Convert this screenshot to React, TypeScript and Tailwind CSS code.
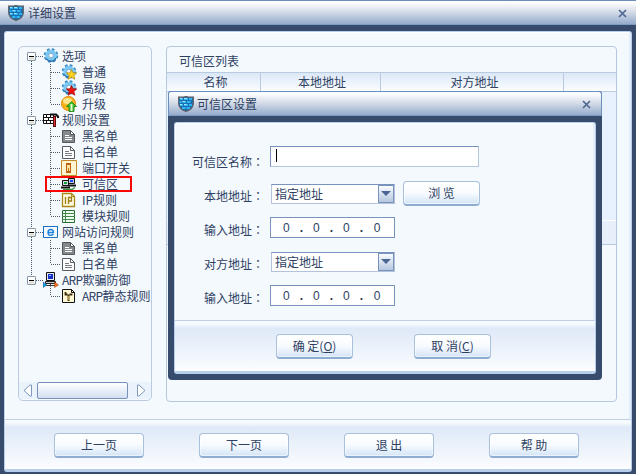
import React from "react";

type IconName =
  | "gear" | "gearGold" | "gearRed" | "upgrade" | "rules" | "docDark" | "docLight"
  | "port" | "zone" | "ip" | "module" | "web" | "arp" | "arpRule";

function Shield() {
  return (
    <svg width="16" height="16" viewBox="0 0 16 16" className="block shrink-0">
      <path d="M.7 1Q4 1.500 8 .6q4 .9 7.300.4V7.500C15.300 11.500 12 14 8 15.400 4 14 .7 11.500.7 7.500z" fill="#1c6fae" stroke="#5b5f66" strokeWidth="1.200" />
      <path d="M2 2h3v2H2zM6 2h4v2H6zM11 2h3v2h-3zM1.500 5h2v2h-2zM4.500 5H8v2H4.500zM9 5h3.500v2H9zM2 8h3v2H2zM6 8h4v2H6zM11 8h3v2h-3zM4 11h3.500v2H4zM8.500 11H12v2H8.500z" fill="#2cb4f6" />
      <path d="M2 2h2v1H2zM6 2h3v1H6zM4.500 5H7v1H4.500zM2 8h2v1H2zM6 8h2.500v1H6z" fill="#9be8ff" />
    </svg>
  );
}

function Gear() {
  return (
    <g>
      <circle cx="8" cy="7.500" r="5.900" fill="none" stroke="#3a8cc6" strokeWidth="2.800" strokeDasharray="2.600 2.030" />
      <circle cx="8" cy="7.500" r="4.200" fill="#f4faff" stroke="#7cc8f2" strokeWidth="3.200" />
      <path d="M3.200 10.500A5.500 5.500 0 0 0 13 10" fill="none" stroke="#2a6fae" strokeWidth="1.400" />
      <circle cx="8" cy="7.500" r="2.300" fill="#fff" stroke="#3f87bd" strokeWidth=".7" />
    </g>
  );
}

const STAR = "M10.500 5.500l1.500 3.200 3.700.2-2.800 2.500 1 3.900-3.400-2-3.400 2 1-3.900L5.300 8.900l3.700-.2z";

function Doc({ fill, line, edge }: { fill: string; line: string; edge: string }) {
  return (
    <g>
      <path d="M1.500 2.500h8l4 4v8h-12z" fill={fill} stroke={edge} />
      <path d="M9.500 2.500v4h4z" fill="#fff" stroke={edge} />
      <path d="M4 7.500h4M4 9.500h7M4 11.500h7" stroke={line} />
    </g>
  );
}

function Icon({ name }: { name: IconName }) {
  return (
    <svg width="16" height="16" viewBox="0 0 16 16" className="block shrink-0">
      {name === "gear" && <Gear />}
      {name === "gearGold" && (<><Gear /><path d={STAR} fill="#ffd21e" stroke="#a77a00" strokeWidth=".6" /></>)}
      {name === "gearRed" && (<><Gear /><path d={STAR} fill="#f01010" stroke="#8e0000" strokeWidth=".6" /></>)}
      {name === "upgrade" && (
        <>
          <circle cx="7.500" cy="7.500" r="7" fill="#ffb51c" stroke="#dc8608" />
          <ellipse cx="6.500" cy="5" rx="4.500" ry="3" fill="#ffe58c" />
          <path d="M10.500 5.500l5 5H13v5H8v-5H5.500z" fill="#3fbf2c" stroke="#1f8a1a" strokeWidth=".9" />
          <path d="M10.500 8v7" stroke="#e4fbd0" strokeWidth="2" />
        </>
      )}
      {name === "rules" && (
        <>
          <path d="M.5 2.500h10v9H.5z" fill="#fff" stroke="#111" />
          <path d="M0 5.500h11M0 8.500h11M3.500 3v2.500M7.500 3v2.500M5.500 6v2.500M3.500 9v2.500M7.500 9v2.500" stroke="#111" />
          <path d="M7 2.500h6l2 2v1.500" fill="none" stroke="#111" strokeWidth="2" />
          <path d="M11.500 4v11" stroke="#5b0d0d" strokeWidth="3" />
          <path d="M11.500 5v9" stroke="#e63030" />
        </>
      )}
      {name === "docDark" && <Doc fill="#85888d" line="#fff" edge="#54575c" />}
      {name === "docLight" && <Doc fill="#fff" line="#777c82" edge="#565b61" />}
      {name === "port" && (
        <>
          <path d="M.5.5h15v15H.5z" fill="#fff4d2" stroke="#c38a25" />
          <path d="M5 3h5v10H5z" fill="#b86212" />
          <path d="M6 5h3v6H6z" fill="#ffe2a0" />
          <path d="M7 8h1v3H7z" fill="#d07a1f" />
        </>
      )}
      {name === "zone" && (
        <>
          <path d="M7.500 2.500h6v5h-6z" fill="#c4cad2" stroke="#111" />
          <path d="M9 4h3v2H9z" fill="#1a46ff" />
          <path d="M7 9.500h8" stroke="#111" strokeWidth="2" />
          <path d="M1.500 4.500h6v5h-6z" fill="#d5d9de" stroke="#111" />
          <path d="M3 6h3v2H3z" fill="#12a53c" />
          <path d="M0 11.500h9" stroke="#111" strokeWidth="2" />
          <path d="M2 13.500h9l3-2" fill="none" stroke="#3a8f3a" strokeWidth="1.300" />
        </>
      )}
      {name === "ip" && (
        <>
          <path d="M1.500 1.500h9l3 3v10h-12z" fill="#fffbe2" stroke="#a98719" strokeWidth="1.300" />
          <path d="M10.500 1.500v3h3" fill="none" stroke="#a98719" />
          <path d="M4.500 5v7M7.500 12V5.500h3v3.500h-3" fill="none" stroke="#9a7c12" strokeWidth="1.300" />
        </>
      )}
      {name === "module" && (
        <>
          <path d="M1.500 2.500h12v12h-12z" fill="#eefaef" stroke="#2d6b35" />
          <path d="M1 5.500h13M1 8.500h13M1 11.500h13M4.500 3v11" stroke="#3f8a48" />
        </>
      )}
      {name === "web" && (
        <>
          <path d="M.5 2.500h14v11H.5z" fill="#f4faff" stroke="#1d6fc0" />
          <path d="M0 2.500h15" stroke="#1d6fc0" />
          <path d="M5 8.500h5.500c0-4-5.500-4-5.500 0s4 3.200 5.300 1.500" fill="none" stroke="#1d83dc" strokeWidth="1.400" />
        </>
      )}
      {name === "arp" && (
        <>
          <path d="M3.500.5h8v8h-8z" fill="#e7eaee" stroke="#111" />
          <path d="M5 2h5v5H5z" fill="#1430c8" />
          <path d="M6 3h2v1H6z" fill="#9ec4ff" />
          <path d="M2.500 9.500h10v2h-10z" fill="#c4c9ce" stroke="#222" />
          <path d="M7.500 11.500v3M3 13.500h9" stroke="#333" />
          <path d="M0 10l4 3-4 2.500z" fill="#1ba0e8" stroke="#12517c" strokeWidth=".5" />
          <path d="M11.500 10l4 3-4 2.500z" fill="#f4721c" stroke="#95380a" strokeWidth=".5" />
        </>
      )}
      {name === "arpRule" && (
        <>
          <path d="M1.500 1.500h9l3 3v10h-12z" fill="#fff8d2" stroke="#111" />
          <path d="M10.500 1.500v3h3" fill="none" stroke="#111" />
          <path d="M4.500 4v2.500h2M10.500 5.500v1h-2M7.500 6.500V13" fill="none" stroke="#3a2a08" strokeWidth="1.800" />
          <path d="M7.500 8v4" stroke="#e0b040" strokeWidth=".8" />
        </>
      )}
    </svg>
  );
}

type Row = { text: string; icon: IconName; child?: boolean; last?: boolean; noRoot?: boolean; marked?: boolean };

const ROWS: Row[] = [
  { text: "选项", icon: "gear" },
  { text: "普通", icon: "gearGold", child: true },
  { text: "高级", icon: "gearRed", child: true },
  { text: "升级", icon: "upgrade", child: true, last: true },
  { text: "规则设置", icon: "rules" },
  { text: "黑名单", icon: "docDark", child: true },
  { text: "白名单", icon: "docLight", child: true },
  { text: "端口开关", icon: "port", child: true },
  { text: "可信区", icon: "zone", child: true, marked: true },
  { text: "IP规则", icon: "ip", child: true },
  { text: "模块规则", icon: "module", child: true, last: true },
  { text: "网站访问规则", icon: "web" },
  { text: "黑名单", icon: "docDark", child: true },
  { text: "白名单", icon: "docLight", child: true, last: true },
  { text: "ARP欺骗防御", icon: "arp", noRoot: true },
  { text: "ARP静态规则", icon: "arpRule", child: true, last: true, noRoot: true },
];

function Guides({ row, index }: { row: Row; index: number }) {
  const dots = { stroke: "#4f5b6b", strokeDasharray: "1 1", fill: "none" };
  if (row.child) {
    return (
      <svg width="42" height="16" className="block shrink-0">
        {!row.noRoot && <path d="M12.500 0v16" {...dots} />}
        <path d={row.last ? "M31.500 0v8" : "M31.500 0v16"} {...dots} />
        <path d="M32 8.500h10" {...dots} />
      </svg>
    );
  }
  return (
    <svg width="24" height="16" className="block shrink-0">
      {index > 0 && <path d="M12.500 0v4" {...dots} />}
      {!row.noRoot && <path d="M12.500 13v3" {...dots} />}
      <path d="M17 8.500h7" {...dots} />
      <rect x="8.500" y="4.500" width="8" height="8" rx=".5" fill="#fff" stroke="#8795a8" />
      <path d="M10 10.500h5.500" stroke="#dcd9d0" strokeWidth="2" />
      <path d="M10 8.500h5" stroke="#000" />
    </svg>
  );
}

function TreeRow({ row, index }: { row: Row; index: number }) {
  return (
    <div className="relative flex h-4 items-center">
      <Guides row={row} index={index} />
      <Icon name={row.icon} />
      <span className={`whitespace-nowrap leading-4 ${row.child ? "ml-[5px]" : "ml-[3px]"}`}>
        {row.text.startsWith("ARP") ? (
          <><span className="tracking-[-0.7px]">ARP</span>{row.text.slice(3)}</>
        ) : row.text}
      </span>
      {row.marked && <span className="absolute left-[26px] top-0 h-4 w-[87px] border-2 border-[#f90606]" />}
    </div>
  );
}

function Button({ children, wide }: { children: React.ReactNode; wide?: boolean }) {
  return (
    <button
      className={`h-[25px] shrink-0 whitespace-pre rounded-[4px] border border-[#a9c0dc] border-b-2 border-b-[#8fadd1] bg-linear-to-b from-white via-[#f8fbff] to-[#d3e4f6] pb-px leading-5 shadow-[inset_0_0_0_1px_#ffffff80] ${wide ? "w-[90px]" : "w-[77px]"}`}
    >
      {children}
    </button>
  );
}

function TitleBar({ title, inner }: { title: string; inner?: boolean }) {
  return (
    <div
      className={`flex h-[25px] shrink-0 items-center border-t border-[#6a8fbd] bg-linear-to-b from-white from-5% via-[#dbe1eb] via-40% to-[#91a8ca] shadow-[inset_0_-1px_0_#7e9bc4] ${inner ? "rounded-t-[3px] border-x pl-[9px] pr-[10px]" : "pl-2 pr-[9px]"}`}
    >
      <Shield />
      <span className={`flex-1 ${inner ? "ml-[3px]" : "ml-[4px]"}`}>{title}</span>
      <svg width="9" height="9" viewBox="0 0 9 9" className="block">
        <path d="M1 1l7 7M8 1L1 8" stroke="#4f678f" strokeWidth="1.700" />
      </svg>
    </div>
  );
}

function Field({ label, children }: { label: string; children: React.ReactNode }) {
  return (
    <div className="flex h-[34px] items-start">
      <div className="flex w-[96px] shrink-0 justify-end whitespace-nowrap pr-[7px] pt-[4px] leading-4">
        {label}
        <span className="w-3 [font-family:'Noto_Sans_CJK_TC',sans-serif]">：</span>
      </div>
      {children}
    </div>
  );
}

function Select() {
  return (
    <div className="flex h-5 w-[124px] border border-[#b4c3d9] border-t-[#7893bc] bg-white">
      <span className="flex-1 pl-[3px] leading-[17px]">指定地址</span>
      <span className="flex h-[18px] w-[16px] items-center justify-center border border-[#7893bc] bg-linear-to-b from-[#fafcff] to-[#b6c7df]">
        <svg width="10" height="6" className="block"><path d="M0 0h10L5 5z" fill="#4b6594" /></svg>
      </span>
    </div>
  );
}

function IpBox() {
  return (
    <div className="flex h-[21px] w-[125px] items-center border border-[#7893bc] bg-white pl-[11px] font-['Liberation_Sans',sans-serif] text-[12px]">
      {[0, 1, 2, 3].map((i) => (
        <span key={i} className="flex w-[30px]">
          <span className="w-[10px] text-center">0</span>
          {i < 3 && <span className="w-[24px] text-center font-bold text-[#263247]">.</span>}
        </span>
      ))}
    </div>
  );
}

function Dialog() {
  return (
    <div className="absolute left-[168px] top-[91px] flex h-[289px] w-[434px] flex-col rounded-[4px] bg-[#374b6c]">
      <TitleBar title="可信区设置" inner />
      <div className="mx-[6px] mb-[6px] mt-[6px] flex min-h-0 flex-1 flex-col rounded-[3px] border border-b-[3px] border-[#b8cfec] bg-[#f4f9fe] shadow-[inset_1px_1px_0_#fff,inset_-2px_0_1px_#e3eefb]">
        <div className="flex h-[197px] shrink-0 flex-col pt-[23px]">
          <div className="flex h-[38px] items-start">
            <div className="flex w-[95px] shrink-0 justify-end whitespace-nowrap pr-[6px] pt-[8px] leading-4">
              可信区名称
              <span className="w-3 [font-family:'Noto_Sans_CJK_TC',sans-serif]">：</span>
            </div>
            <div className="h-[21px] w-[209px] border border-[#b4c6dc] border-t-[#7893bc] border-l-[#7893bc] bg-white pl-[5px] pt-[2px]">
              <div className="h-[13px] w-px bg-black" />
            </div>
          </div>
          <Field label="本地地址">
            <Select />
            <div className="-mt-[3px] ml-[8px]"><Button>浏 览</Button></div>
          </Field>
          <Field label="输入地址"><div className="-ml-px -mt-px"><IpBox /></div></Field>
          <Field label="对方地址"><Select /></Field>
          <Field label="输入地址"><div className="-ml-px -mt-px"><IpBox /></div></Field>
        </div>
        <div className="flex min-h-0 flex-1 items-start gap-[61px] border-t border-[#c0d1e6] bg-linear-to-b from-[#f7fbff] from-5% via-[#dfe9f7] via-15% to-[#fbfdff] pl-[101px] pt-[13px]">
          <Button>确 定(<u>O</u>)</Button>
          <Button>取 消(<u>C</u>)</Button>
        </div>
      </div>
    </div>
  );
}

export default function App() {
  return (
    <div className="relative flex h-[474px] w-[636px] flex-col overflow-hidden bg-[#374b6c] font-['Noto_Sans_CJK_SC',sans-serif] text-[12px] text-[#2e4162]">
      <TitleBar title="详细设置" />
      <div className="mb-[2px] ml-[4px] mr-[4px] mt-[6px] flex min-h-0 flex-1 flex-col rounded-[3px] border border-b-[3px] border-[#b8cfec] bg-[#f4f9fe] shadow-[inset_1px_1px_0_#fff,inset_-2px_0_1px_#e3eefb]">
        <div className="flex h-[387px] shrink-0 gap-[14px] pl-[13px] pt-[14px]">
          <div className="flex h-[355px] w-[134px] shrink-0 flex-col overflow-hidden rounded-[5px] border border-[#bccce0] pt-px">
            <div className="flex-1">
              {ROWS.map((row, i) => <TreeRow key={i} row={row} index={i} />)}
            </div>
            <div className="mb-px flex h-[17px] shrink-0 items-center bg-[#eaf2fc] pl-1 pr-[5px]">
              <svg width="9" height="13" className="block"><path d="M8.500 1v11H7L1 6.500 7 1z" fill="#fff" stroke="#7f97bd" /></svg>
              <div className="ml-[5px] h-[17px] w-[92px] rounded-[2px] border border-[#7690ba] bg-linear-to-b from-white to-[#d2dff1]" />
              <svg width="9" height="13" className="ml-[9px] block"><path d="M.5 1v11H2l6-5.500L2 1z" fill="#fff" stroke="#7f97bd" /></svg>
            </div>
          </div>
          <div className="flex h-[356px] w-[451px] shrink-0 flex-col rounded-[4px] border border-[#b5c7dd]">
            <div className="h-[25px] shrink-0 pl-[12px] leading-[27px]">可信区列表</div>
            <div className="flex h-5 shrink-0 border-y border-[#b9cbe0] bg-linear-to-b from-[#dce8f7] to-[#fbfdff] text-center leading-[18px]">
              <div className="w-[94px] border-r border-[#b9cbe0] pl-1">名称</div>
              <div className="w-[120px] border-r border-[#b9cbe0] pl-[3px]">本地地址</div>
              <div className="w-[183px] border-r border-[#b9cbe0] pl-[5px]">对方地址</div>
              <div className="flex-1" />
            </div>
            <div className="h-[129px] shrink-0 border-b border-white bg-[#e7f2fe]" />
            <div className="h-[24px] shrink-0 border-b border-[#b5c7dd] bg-[#e7f0fa]" />
          </div>
        </div>
        <div className="flex min-h-0 flex-1 items-start gap-[55px] border-t border-[#c0d1e6] bg-linear-to-b from-[#f7fbff] from-5% via-[#dfe9f7] via-15% to-[#fbfdff] pl-[49px] pt-[13px]">
          <Button wide>上一页</Button>
          <Button wide>下一页</Button>
          <Button wide>退 出</Button>
          <Button wide>帮 助</Button>
        </div>
      </div>
      <Dialog />
    </div>
  );
}
